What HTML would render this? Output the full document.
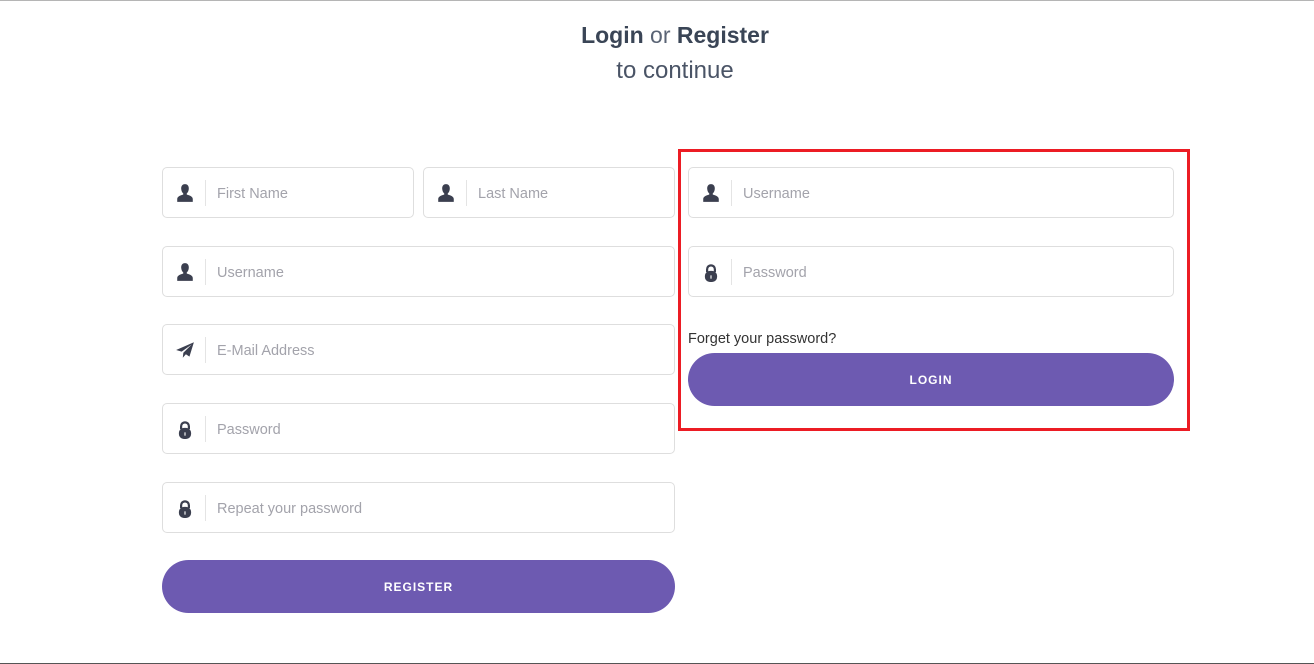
<!DOCTYPE html>
<html><head><style>
*{box-sizing:border-box;margin:0;padding:0}
body{width:1314px;height:664px;background:#fff;position:relative;overflow:hidden;font-family:"Liberation Sans",sans-serif}
.top{position:absolute;left:0;right:0;top:0;height:1px;background:#b5b5b5}
.bot{position:absolute;left:0;right:0;bottom:0;height:1px;background:#555}
.title{position:absolute;left:18px;width:1314px;text-align:center;color:#3a4556}
.inp{position:absolute;height:51px;border:1px solid #dedede;border-radius:5px;background:#fff}
.inp .ic{position:absolute;left:12px;top:15px;width:20px;height:20px}
.inp .dv{position:absolute;left:42px;top:12px;width:1px;height:26px;background:#e4e4e4}
.inp span{position:absolute;left:54px;top:18px;font-size:14.5px;color:#a3a3ab}
.btn{position:absolute;height:53px;border-radius:27px;background:#6d5ab1;color:#fff;font-size:12px;font-weight:bold;letter-spacing:1px;text-align:center;line-height:54px}
.red{position:absolute;left:678px;top:149px;width:512px;height:282px;border:3px solid #ec1c24}
</style></head><body>
<div class="title" style="top:22px;font-size:23px"><b>Login</b> <span style="font-weight:normal;color:#5a6475">or</span> <b>Register</b></div>
<div class="title" style="top:57px;font-size:24px;color:#4a5466">to continue</div>
<div class="top"></div>

<svg width="0" height="0" style="position:absolute"><defs>
<symbol id="u" viewBox="0 0 18 18"><path d="M9 1c2.6 0 3.6 2 3.4 4.5-.2 2-1 3.2-1.8 3.8v1.2c2.5.7 5.4 1.6 5.4 4V17H2v-2.5c0-2.4 2.9-3.300 5.4-4V9.3c-.8-.6-1.6-1.8-1.8-3.8C5.4 3 6.4 1 9 1z" fill="#3b3f4f"/></symbol>
<symbol id="l" viewBox="0 0 18 18"><path d="M5.5 9V6.5a3.5 3.5 0 0 1 7 0V9" fill="none" stroke="#3b3f4f" stroke-width="2"/><rect x="3.5" y="8" width="11" height="10" rx="4.5" fill="#3b3f4f"/><rect x="8.5" y="12" width="1" height="3" fill="#fff"/></symbol>
<symbol id="p" viewBox="0 0 18 18"><path d="M17 2L1 9l5 1.5L15 4 7.5 11.5 7 16l2.8-3.2L13 15z" fill="#3b3f4f"/></symbol>
</defs></svg>

<div class="inp" style="left:162px;top:167px;width:252px"><svg class="ic"><use href="#u"/></svg><i class="dv"></i><span>First Name</span></div>
<div class="inp" style="left:423px;top:167px;width:252px"><svg class="ic"><use href="#u"/></svg><i class="dv"></i><span>Last Name</span></div>
<div class="inp" style="left:162px;top:246px;width:513px"><svg class="ic"><use href="#u"/></svg><i class="dv"></i><span>Username</span></div>
<div class="inp" style="left:162px;top:324px;width:513px"><svg class="ic"><use href="#p"/></svg><i class="dv"></i><span>E-Mail Address</span></div>
<div class="inp" style="left:162px;top:403px;width:513px"><svg class="ic"><use href="#l"/></svg><i class="dv"></i><span>Password</span></div>
<div class="inp" style="left:162px;top:482px;width:513px"><svg class="ic"><use href="#l"/></svg><i class="dv"></i><span>Repeat your password</span></div>
<div class="btn" style="left:162px;top:560px;width:513px">REGISTER</div>

<div class="inp" style="left:688px;top:167px;width:486px"><svg class="ic"><use href="#u"/></svg><i class="dv"></i><span>Username</span></div>
<div class="inp" style="left:688px;top:246px;width:486px"><svg class="ic"><use href="#l"/></svg><i class="dv"></i><span>Password</span></div>
<div style="position:absolute;left:688px;top:331px;font-size:14.5px;color:#333">Forget your password?</div>
<div class="btn" style="left:688px;top:353px;width:486px">LOGIN</div>
<div class="red"></div>
<div class="bot"></div>
</body></html>
